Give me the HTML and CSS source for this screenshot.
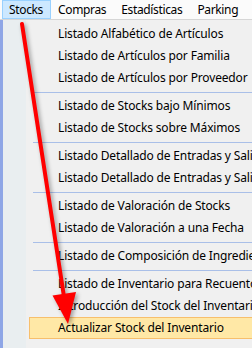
FILE: index.html
```html
<!DOCTYPE html>
<html lang="es">
<head>
  <meta charset="UTF-8">
  <title>Stocks</title>
  <link rel="stylesheet" href="styles.css">
</head>
<body>
  <div class="menubar">
    <span class="bar-item active">Stocks</span>
    <span class="bar-item">Compras</span>
    <span class="bar-item">Estadísticas</span>
    <span class="bar-item">Parking</span>
    <span class="bar-item">Ventas</span>
  </div>

  <div class="main">
    <div class="side">
      <span class="side-label">S</span>
    </div>
    <div class="dropdown">
      <div class="item">Listado Alfabético de Artículos</div>
      <div class="item">Listado de Artículos por Familia</div>
      <div class="item">Listado de Artículos por Proveedor</div>
      <div class="sep"></div>
      <div class="item">Listado de Stocks bajo Mínimos</div>
      <div class="item">Listado de Stocks sobre Máximos</div>
      <div class="sep"></div>
      <div class="item">Listado Detallado de Entradas y Salidas</div>
      <div class="item">Listado Detallado de Entradas y Salidas</div>
      <div class="sep"></div>
      <div class="item">Listado de Valoración de Stocks</div>
      <div class="item">Listado de Valoración a una Fecha</div>
      <div class="sep"></div>
      <div class="item">Listado de Composición de Ingredientes</div>
      <div class="sep"></div>
      <div class="item">Listado de Inventario para Recuento</div>
      <div class="item">Introducción del Stock del Inventario</div>
      <div class="item hover">Actualizar Stock del Inventario</div>
    </div>
  </div>

  <!-- red pointer drawn over the menu -->
  <svg class="arrow" width="252" height="348" viewBox="0 0 252 348">
    <line x1="22" y1="24" x2="64.5" y2="300" stroke="#ff0000" stroke-width="4" stroke-linecap="round"/>
    <polygon points="68,324 52.5,295.5 76,292" fill="#ff0000"/>
  </svg>
</body>
</html>
```

FILE: styles.css
```css
body {
  margin: 0;
  width: 252px;
  height: 348px;
  overflow: hidden;
  font-family: 'Noto Sans', 'Open Sans', sans-serif;
  font-size: 12px;
  letter-spacing: -0.15px;
  color: #000;
  background: #f0f0f0;
  position: relative;
}

.menubar {
  height: 19px;
  display: flex;
  align-items: stretch;
  background: #fbfbfb;
  border-bottom: 1px solid #d6d6d6;
  white-space: nowrap;
  overflow: hidden;
  padding-left: 2px;
}
.bar-item {
  display: flex;
  align-items: center;
  padding: 0 7px 0 6px;
  border: 1px solid transparent;
  letter-spacing: -0.35px;
}
.bar-item.active {
  background: #cce8ff;
  border-color: #99d1ff;
}

.main {
  display: flex;
  height: 328px;
}
.side {
  width: 23px;
  flex: none;
  background: #e9eef0;
  border-left: 3px solid #8ea6e6;
  display: flex;
  flex-direction: column;
  justify-content: flex-end;
  align-items: center;
  overflow: hidden;
}
.side-label {
  writing-mode: vertical-rl;
  transform: rotate(180deg);
  color: #1f3c88;
  font-weight: bold;
  font-size: 12px;
  margin-bottom: -7px;
}

.dropdown {
  flex: 1;
  min-width: 0;
  padding: 3px 0 0 3px;
  background: #f0f0f0;
  overflow: hidden;
}
.item {
  height: 20px;
  line-height: 20px;
  padding-left: 28px;
  border: 1px solid transparent;
  border-right: none;
  white-space: nowrap;
}
.item.hover {
  background: #ffe8a6;
  border-color: #f7bf6c;
}
.sep {
  height: 1px;
  margin: 3px 0 2px 4px;
  background: #a9bfe8;
}

.arrow {
  position: absolute;
  left: 0;
  top: 0;
  pointer-events: none;
  filter: drop-shadow(2px 2px 2px rgba(0, 0, 0, 0.35));
}
```
